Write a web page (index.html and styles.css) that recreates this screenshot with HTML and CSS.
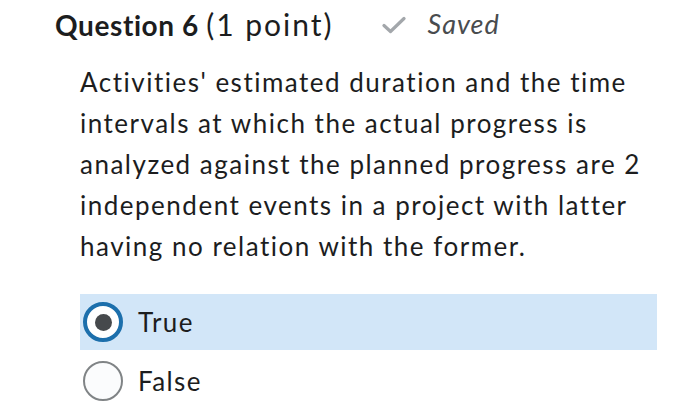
FILE: index.html
```html
<!DOCTYPE html>
<html>
<head>
<meta charset="utf-8">
<link rel="stylesheet" href="styles.css">
</head>
<body>
<div class="page">
  <div class="header">
    <h2 class="title"><span class="qnum">Question 6</span> <span class="points">(1 point)</span></h2>
    <div class="saved">
      <svg class="check" width="24" height="18" viewBox="0 0 24 18"><path d="M2 9.5 L8.5 15.5 L22 2.5" fill="none" stroke="#a3a7ab" stroke-width="3.2" stroke-linecap="round" stroke-linejoin="round"/></svg>
      <span class="saved-text">Saved</span>
    </div>
  </div>
  <p class="question">Activities' estimated duration and the time intervals at which the actual progress is analyzed against the planned progress are 2 independent events in a project with latter having no relation with the former.</p>
  <div class="options">
    <label class="option selected"><span class="radio checked"><span class="dot"></span></span><span class="opt-text">True</span></label>
    <label class="option"><span class="radio"></span><span class="opt-text">False</span></label>
  </div>
</div>
</body>
</html>
```
FILE: styles.css
```css
html, body {
  margin: 0;
  padding: 0;
  background: #ffffff;
}
body {
  font-family: Lato, "Noto Sans", sans-serif;
  color: #1c1d1e;
  font-variant-ligatures: none;
}
.page {
  width: 700px;
  height: 416px;
  overflow: hidden;
}
.header {
  display: flex;
  align-items: center;
  padding: 2px 0 0 55px;
  height: 44px;
}
.title {
  margin: 0;
  font-size: 28px;
  line-height: 44px;
  font-weight: 400;
  color: #1c1d1e;
  white-space: nowrap;
}
.qnum {
  font-weight: 700;
  letter-spacing: 0.6px;
}
.points {
  font-size: 30px;
  letter-spacing: 2px;
}
.saved {
  display: flex;
  align-items: center;
  margin-left: 48px;
  color: #494c4e;
}
.check {
  display: block;
  margin-right: 22px;
  margin-top: 2px;
}
.saved-text {
  font-style: italic;
  font-size: 27px;
  line-height: 44px;
  letter-spacing: 1px;
}
.question {
  margin: 16px 0 0 80px;
  width: 580px;
  font-size: 26px;
  line-height: 41px;
  letter-spacing: 1.5px;
  color: #1c1d1e;
}
.options {
  margin: 27px 0 0 80px;
  width: 577px;
  display: flex;
  flex-direction: column;
  gap: 3px;
}
.option {
  display: flex;
  align-items: center;
  height: 56px;
  padding-left: 3px;
}
.option.selected {
  background: #d2e6f8;
}
.radio {
  box-sizing: border-box;
  width: 40px;
  height: 40px;
  border-radius: 50%;
  border: 2px solid #808486;
  background: #fbfcfd;
  display: flex;
  align-items: center;
  justify-content: center;
  flex: none;
}
.radio.checked {
  border: 4px solid #1c6fac;
  background: #ffffff;
}
.dot {
  width: 17px;
  height: 17px;
  border-radius: 50%;
  background: #46494c;
}
.opt-text {
  margin-left: 15px;
  font-size: 26px;
  letter-spacing: 1.4px;
  color: #1c1d1e;
}
```
